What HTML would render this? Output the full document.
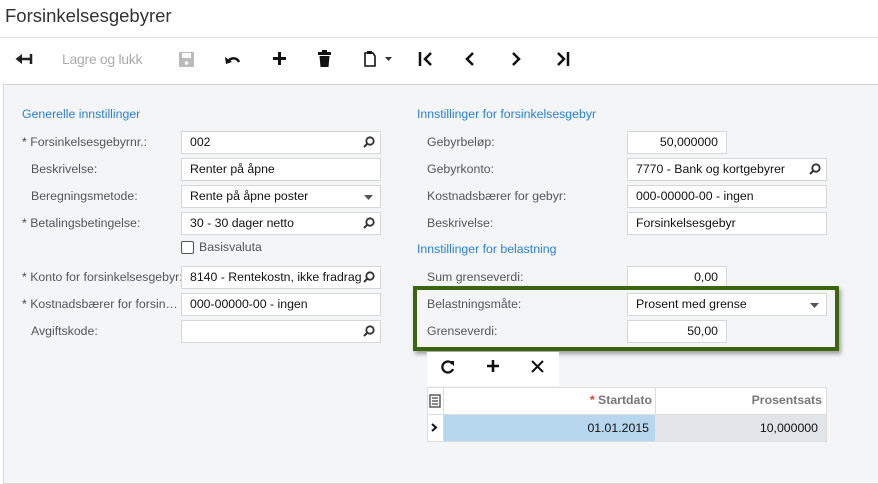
<!DOCTYPE html>
<html><head><meta charset="utf-8"><style>
*{box-sizing:border-box;margin:0;padding:0}
body{width:878px;height:471px;background:#fff;font-family:"Liberation Sans",Arial,sans-serif;font-size:12.3px;color:#333;position:relative;overflow:hidden}
.a{position:absolute}
.title{left:5px;top:5px;font-size:18.5px;color:#333}
.hl{left:0;top:37px;width:878px;height:1px;background:#ddd}
.panel{left:3px;top:84px;width:878px;height:400px;background:#f4f5f7;border:1px solid #d6d6d6}
.lbl{color:#555;white-space:nowrap}
.star{color:#444}
.sec{color:#2a7fd4}
.in{background:#fff;border:1px solid #d6d6d6;height:23px;line-height:21px;padding:0 8px;color:#111;white-space:nowrap;overflow:hidden}
.r{text-align:right}
</style></head><body>
<div class="a title">Forsinkelsesgebyrer</div>
<div class="a hl"></div>
<svg class="a" style="left:15px;top:52px" width="20" height="14" viewBox="0 0 20 14"><path d="M3 7h12" stroke="#222" stroke-width="2.5"/><path d="M0.5 7L7 2v10z" fill="#222"/><path d="M16 2v10" stroke="#222" stroke-width="2.5"/></svg>
<div class="a" style="left:62px;top:51px;color:#aaa;font-size:14px;letter-spacing:-0.3px">Lagre og lukk</div>
<svg class="a" style="left:179px;top:52px" width="15" height="15"><rect x="0" y="0" width="15" height="15" fill="#bbb"/><rect x="3" y="1" width="9" height="5" fill="#fff"/><circle cx="7.5" cy="11" r="1.8" fill="#fff"/></svg>
<svg class="a" style="left:224px;top:52px" width="18" height="14"><path d="M4 10a6 6 0 0 1 11 0" stroke="#111" stroke-width="2.5" fill="none"/><path d="M1 5l1 7 6-2z" fill="#111"/></svg>
<svg class="a" style="left:272px;top:51px" width="15" height="15"><path d="M7.5 1v13M1 7.5h13" stroke="#111" stroke-width="3"/></svg>
<svg class="a" style="left:318px;top:50px" width="13" height="17"><rect x="0" y="2" width="13" height="3" fill="#111"/><rect x="4" y="0" width="5" height="3" fill="#111"/><path d="M1.5 6h10l-1 11h-8z" fill="#111"/></svg>
<svg class="a" style="left:363px;top:50px" width="30" height="18"><path d="M2 3h8l2 3v10H2z" stroke="#111" stroke-width="1.6" fill="#fff"/><rect x="4" y="1" width="5" height="3" fill="#111"/><path d="M22 7h7l-3.5 4z" fill="#333"/></svg>
<svg class="a" style="left:418px;top:51px" width="16" height="16"><path d="M2 1v14" stroke="#111" stroke-width="2.5"/><path d="M13 2L7 8l6 6" stroke="#111" stroke-width="2.5" fill="none"/></svg>
<svg class="a" style="left:464px;top:51px" width="12" height="16"><path d="M9 2L3 8l6 6" stroke="#111" stroke-width="2.5" fill="none"/></svg>
<svg class="a" style="left:510px;top:51px" width="12" height="16"><path d="M3 2l6 6-6 6" stroke="#111" stroke-width="2.5" fill="none"/></svg>
<svg class="a" style="left:555px;top:51px" width="16" height="16"><path d="M3 2l6 6-6 6" stroke="#111" stroke-width="2.5" fill="none"/><path d="M13 1v14" stroke="#111" stroke-width="2.5"/></svg>

<div class="a panel"></div>
<div class="a sec" style="left:22px;top:107px">Generelle innstillinger</div>
<div class="a lbl" style="left:22px;top:135px"><span class="star">*</span> Forsinkelsesgebyrnr.:</div>
<div class="a lbl" style="left:31px;top:162px">Beskrivelse:</div>
<div class="a lbl" style="left:31px;top:189px">Beregningsmetode:</div>
<div class="a lbl" style="left:22px;top:216px"><span class="star">*</span> Betalingsbetingelse:</div>
<div class="a lbl" style="left:22px;top:270px"><span class="star">*</span> Konto for forsinkelsesgebyr:</div>
<div class="a lbl" style="left:22px;top:297px"><span class="star">*</span> Kostnadsbærer for forsin…</div>
<div class="a lbl" style="left:31px;top:324px">Avgiftskode:</div>
<div class="a in" style="left:181px;top:131px;width:200px">002</div>
<div class="a in" style="left:181px;top:158px;width:200px">Renter på åpne</div>
<div class="a in" style="left:181px;top:185px;width:200px">Rente på åpne poster</div>
<div class="a in" style="left:181px;top:212px;width:200px">30 - 30 dager netto</div>
<div class="a" style="left:181px;top:241px;width:13px;height:13px;border:1px solid #555;border-radius:2px;background:#fff"></div>
<div class="a lbl" style="left:199px;top:240px">Basisvaluta</div>
<div class="a in" style="left:181px;top:266px;width:200px"><div style="width:172px;overflow:hidden">8140 - Rentekostn, ikke fradragsberettiget</div></div>
<div class="a in" style="left:181px;top:293px;width:200px">000-00000-00 - ingen</div>
<div class="a in" style="left:181px;top:320px;width:200px"></div>
<div class="a sec" style="left:417px;top:107px">Innstillinger for forsinkelsesgebyr</div>
<div class="a lbl" style="left:427px;top:135px">Gebyrbeløp:</div>
<div class="a lbl" style="left:427px;top:162px">Gebyrkonto:</div>
<div class="a lbl" style="left:427px;top:189px">Kostnadsbærer for gebyr:</div>
<div class="a lbl" style="left:427px;top:216px">Beskrivelse:</div>
<div class="a sec" style="left:417px;top:242px">Innstillinger for belastning</div>
<div class="a lbl" style="left:427px;top:270px">Sum grenseverdi:</div>
<div class="a in r" style="left:627px;top:131px;width:100px">50,000000</div>
<div class="a in" style="left:627px;top:158px;width:200px">7770 - Bank og kortgebyrer</div>
<div class="a in" style="left:627px;top:185px;width:200px">000-00000-00 - ingen</div>
<div class="a in" style="left:627px;top:212px;width:200px">Forsinkelsesgebyr</div>
<div class="a in r" style="left:627px;top:266px;width:100px">0,00</div>
<div class="a" style="left:413px;top:286px;width:426px;height:65px;border:4px solid #3b650f;box-shadow:2px 3px 4px rgba(0,0,0,.35)"></div>
<div class="a lbl" style="left:427px;top:297px">Belastningsmåte:</div>
<div class="a lbl" style="left:427px;top:324px">Grenseverdi:</div>
<div class="a in" style="left:627px;top:293px;width:200px">Prosent med grense</div>
<div class="a in r" style="left:627px;top:320px;width:100px">50,00</div>
<svg class="a" style="left:363px;top:136px" width="12" height="12"><circle cx="7" cy="5" r="3.7" stroke="#333" stroke-width="1.8" fill="none"/><path d="M4.5 7.5L1 11" stroke="#333" stroke-width="2"/></svg>
<svg class="a" style="left:363px;top:217px" width="12" height="12"><circle cx="7" cy="5" r="3.7" stroke="#333" stroke-width="1.8" fill="none"/><path d="M4.5 7.5L1 11" stroke="#333" stroke-width="2"/></svg>
<svg class="a" style="left:363px;top:271px" width="12" height="12"><circle cx="7" cy="5" r="3.7" stroke="#333" stroke-width="1.8" fill="none"/><path d="M4.5 7.5L1 11" stroke="#333" stroke-width="2"/></svg>
<svg class="a" style="left:363px;top:325px" width="12" height="12"><circle cx="7" cy="5" r="3.7" stroke="#333" stroke-width="1.8" fill="none"/><path d="M4.5 7.5L1 11" stroke="#333" stroke-width="2"/></svg>
<svg class="a" style="left:809px;top:163px" width="12" height="12"><circle cx="7" cy="5" r="3.7" stroke="#333" stroke-width="1.8" fill="none"/><path d="M4.5 7.5L1 11" stroke="#333" stroke-width="2"/></svg>
<svg class="a" style="left:364px;top:195px" width="9" height="5"><path d="M0 0h9L4.5 5z" fill="#555"/></svg>
<svg class="a" style="left:810px;top:303px" width="9" height="5"><path d="M0 0h9L4.5 5z" fill="#555"/></svg>
<div class="a" style="left:427px;top:352px;width:132px;height:34px;background:#fff"></div>
<svg class="a" style="left:440px;top:359px" width="16" height="16"><path d="M12.5 5A5.5 5.5 0 1 0 13 10" stroke="#111" stroke-width="2.3" fill="none"/><path d="M9 2h5v5z" fill="#111"/></svg>
<svg class="a" style="left:486px;top:359px" width="14" height="14"><path d="M7 1v12M1 7h12" stroke="#111" stroke-width="2.6"/></svg>
<svg class="a" style="left:531px;top:360px" width="13" height="13"><path d="M1 1l11 11M12 1L1 12" stroke="#111" stroke-width="2"/></svg>
<div class="a" style="left:427px;top:387px;width:400px;height:55px;border:1px solid #ddd;background:#fff"></div>
<div class="a" style="left:443px;top:387px;width:1px;height:55px;background:#ddd"></div>
<div class="a" style="left:655px;top:387px;width:1px;height:27px;background:#ddd"></div>
<div class="a" style="left:428px;top:414px;width:398px;height:1px;background:#ddd"></div>
<div class="a" style="left:444px;top:415px;width:211px;height:26px;background:#b7d7ef"></div>
<div class="a" style="left:655px;top:415px;width:171px;height:26px;background:#e1e4e8"></div>
<div class="a" style="left:444px;top:393px;width:208px;text-align:right;color:#777;font-weight:bold"><span style="color:#e33">*</span> Startdato</div>
<div class="a" style="left:656px;top:393px;width:166px;text-align:right;color:#777;font-weight:bold">Prosentsats</div>
<div class="a" style="left:444px;top:421px;width:205px;text-align:right;color:#111">01.01.2015</div>
<div class="a" style="left:656px;top:421px;width:162px;text-align:right;color:#111">10,000000</div>
<svg class="a" style="left:429px;top:394px" width="12" height="14"><rect x="1" y="1" width="10" height="12" stroke="#444" stroke-width="1.3" fill="none"/><path d="M3 4h6M3 7h6M3 10h6" stroke="#444" stroke-width="1.2"/></svg>
<svg class="a" style="left:431px;top:423px" width="7" height="9"><path d="M1 1l4 3.5L1 8" stroke="#111" stroke-width="2" fill="none"/></svg>
</body></html>
